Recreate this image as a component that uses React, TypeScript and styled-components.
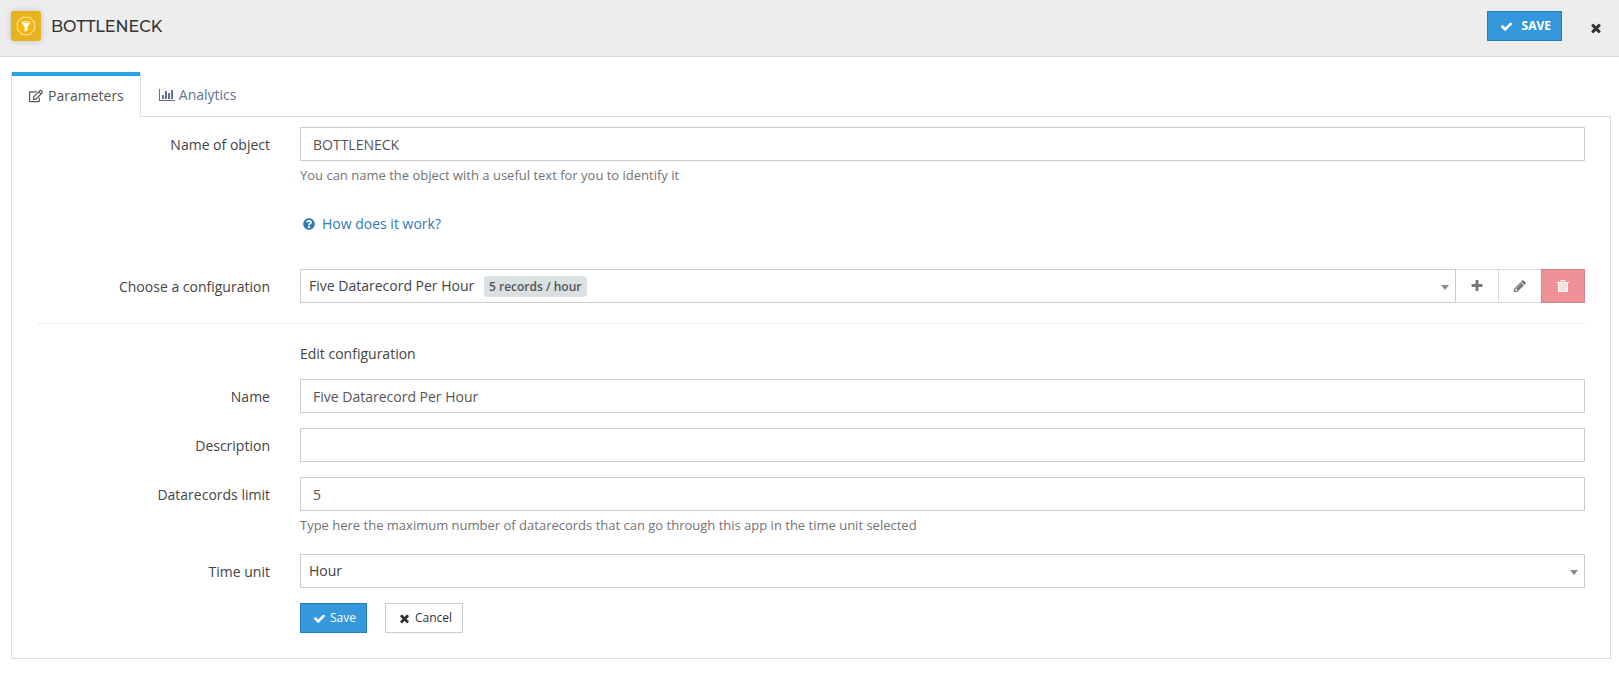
import React from "react";
import styled, { createGlobalStyle, css } from "styled-components";
import { FaRegEdit, FaQuestionCircle } from "react-icons/fa";

const GlobalStyle = createGlobalStyle`
  *, *::before, *::after { box-sizing: border-box; }
  body {
    margin: 0;
    background: #fff;
    color: #444;
    font: 14px/20px "Open Sans", "Noto Sans", sans-serif;
  }
  button, input, select { font: inherit; margin: 0; }
`;

const Header = styled.header`
  display: flex;
  align-items: flex-start;
  padding: 11px 16px 13px 11px;
  background: #ededed;
  border-bottom: 1px solid #d8d8d8;
`;

const AppLogo = styled.svg`
  flex: none;
  width: 30px;
  height: 30px;
  border-radius: 3px;
  background: #e4b31e;
  box-shadow: 0 0 6px rgba(0, 0, 0, 0.2);
`;

const Title = styled.h1`
  flex: 1;
  margin: 0 0 0 10px;
  color: #333;
  font: 500 16px/32px Montserrat, Inter, sans-serif;
`;

const Button = styled.button<{ $primary?: boolean; $strong?: boolean }>`
  display: inline-flex;
  align-items: center;
  justify-content: center;
  height: 30px;
  gap: ${(p) => (p.$strong ? 9 : 4)}px;
  padding: 0 10px 0 12px;
  border: 1px solid #ccc;
  background: #fff;
  color: #333;
  font-size: 12px;
  line-height: 18px;
  font-weight: ${(p) => (p.$strong ? 700 : 400)};
  cursor: pointer;
  ${(p) =>
    p.$primary &&
    css`
      border-color: #217dbb;
      background: #3598dc;
      color: #fff;
    `}
`;

const CloseButton = styled.button`
  display: flex;
  margin: 10px 0 0 27px;
  padding: 0;
  border: 0;
  background: none;
  color: #333;
  cursor: pointer;
`;

const Main = styled.main`
  padding: 15px 8px 20px 11px;
`;

const Tabs = styled.nav`
  display: flex;
  position: relative;
  margin-bottom: -1px;
`;

const Tab = styled.a<{ $active?: boolean }>`
  display: flex;
  align-items: center;
  gap: ${(p) => (p.$active ? 5 : 4)}px;
  height: 45px;
  padding: ${(p) => (p.$active ? "2px 16px 0 17px" : "0 18px")};
  color: ${(p) => (p.$active ? "#555" : "#5f7390")};
  text-decoration: none;
  ${(p) =>
    p.$active &&
    css`
      border: solid #ddd;
      border-width: 0 1px;
      background: #fff;
      box-shadow: inset 0 4px #27a4e3;
    `}
`;

const Panel = styled.form`
  padding: 10px 25px 25px;
  border: 1px solid #ddd;
`;

const Row = styled.div`
  display: flex;
  align-items: flex-start;
  margin: 0 -15px 15px;

  &:last-child {
    margin-bottom: 0;
  }
`;

const LabelCell = styled.div`
  flex: none;
  width: calc(100% / 6);
  padding: 8px 15px 0;
  text-align: right;
`;

const Field = styled.div`
  flex: 1;
  min-width: 0;
  padding: 0 15px;
`;

const controlBox = css`
  display: block;
  width: 100%;
  height: 34px;
  border: 1px solid #ccc;
  border-radius: 0;
  background: #fff;
  outline: 0;
`;

const TextInput = styled.input`
  ${controlBox}
  padding: 0 12px;
  color: #555;
`;

const SelectWrap = styled.div`
  flex: 1;
  min-width: 0;
  position: relative;

  &::after {
    content: "";
    position: absolute;
    right: 7px;
    top: 16px;
    border: solid transparent;
    border-width: 5px 4px 0;
    border-top-color: #888;
    pointer-events: none;
  }
`;

const Select = styled.select`
  ${controlBox}
  appearance: none;
  padding: 0 20px 0 8px;
  color: #444;
`;

const Badge = styled.span`
  position: absolute;
  left: 184px;
  top: 7px;
  padding: 0 5px;
  border-radius: 4px;
  background: #d9e1e2;
  color: #555;
  font-size: 12px;
  line-height: 21px;
  font-weight: 600;
  pointer-events: none;
`;

const InputGroup = styled.div`
  display: flex;
`;

const IconButton = styled.button<{ $danger?: boolean }>`
  display: flex;
  flex: none;
  align-items: center;
  justify-content: center;
  width: 44px;
  height: 34px;
  margin-left: -1px;
  padding: 0;
  border: 1px solid ${(p) => (p.$danger ? "#cf858b" : "#ddd")};
  background: ${(p) => (p.$danger ? "#f09197" : "#fff")};
  color: ${(p) => (p.$danger ? "#fff" : "#777")};
  cursor: pointer;
`;

const Help = styled.p`
  margin: 5px 0;
  color: #737373;
  font-size: 13px;
  line-height: 18px;
`;

const HelpLink = styled.a`
  display: inline-flex;
  align-items: center;
  gap: 7px;
  margin: 10px 0 20px;
  padding-left: 3px;
  color: #337ab7;
  text-decoration: none;
`;

const Divider = styled.hr`
  margin: 20px 0;
  border: 0;
  border-top: 1px solid #eee;
`;

const SectionTitle = styled.h2`
  margin: 0;
  font-size: 14px;
  line-height: 20px;
  font-weight: 400;
`;

const Actions = styled.div`
  display: flex;
  gap: 18px;
`;

const GLYPHS = {
  check:
    "M1671 566q0 40-28 68l-724 724-136 136q-28 28-68 28t-68-28l-136-136-362-362q-28-28-28-68t28-68l136-136q28-28 68-28t68 28l294 295 656-657q28-28 68-28t68 28l136 136q28 28 28 68z",
  times:
    "M1490 1322q0 40-28 68l-136 136q-28 28-68 28t-68-28l-294-294-294 294q-28 28-68 28t-68-28l-136-136q-28-28-28-68t28-68l294-294-294-294q-28-28-28-68t28-68l136-136q28-28 68-28t68 28l294 294 294-294q28-28 68-28t68 28l136 136q28 28 28 68t-28 68l-294 294 294 294q28 28 28 68z",
  pencil:
    "M491 1536l91-91-235-235-91 91v107h128v128h107zm523-928q0-22-22-22-10 0-17 7l-542 542q-7 7-7 17 0 22 22 22 10 0 17-7l542-542q7-7 7-17zm-54-192l416 416-832 832h-416v-416zm683 96q0 53-37 90l-166 166-416-416 166-165q36-38 90-38 53 0 91 38l235 234q37 39 37 91z",
  plus: "M1600 736v192q0 40-28 68t-68 28h-416v416q0 40-28 68t-68 28h-192q-40 0-68-28t-28-68v-416h-416q-40 0-68-28t-28-68v-192q0-40 28-68t68-28h416v-416q0-40 28-68t68-28h192q40 0 68 28t28 68v416h416q40 0 68 28t28 68z",
};

function Glyph({ name, size }: { name: keyof typeof GLYPHS; size: number }) {
  return (
    <svg width={size} height={size} viewBox="0 0 1792 1792" fill="currentColor" aria-hidden="true">
      <path d={GLYPHS[name]} />
    </svg>
  );
}

function ChartIcon() {
  return (
    <svg width="16" height="14" viewBox="0 0 2048 1792" fill="currentColor" aria-hidden="true">
      <path d="M640 896v512h-256v-512h256zm384-512v1024h-256v-1024h256zm1024 1152v128h-2048v-1536h128v1408h1920zm-640-896v768h-256v-768h256zm384-384v1152h-256v-1152h256z" />
    </svg>
  );
}

function TrashIcon() {
  return (
    <svg width="12" height="12" viewBox="0 0 12 12" fill="none" stroke="currentColor" aria-hidden="true">
      <path d="M0 2.500h12" />
      <path d="M4 2V.5h4V2" />
      <path d="M1.500 3v8.500h9V3" fill="currentColor" fillOpacity=".7" />
    </svg>
  );
}

function BottleneckLogo() {
  return (
    <AppLogo viewBox="0 0 30 30" aria-hidden="true">
      <path
        d="M11.400 6.400h7.200l5 5v7.200l-5 5h-7.200l-5-5v-7.200z"
        fill="#f2b410"
        stroke="#fbdc92"
        strokeWidth="1.300"
      />
      <circle cx="15" cy="15" r="6" fill="#fdb804" />
      <path d="M10.300 11.300q4.700-2 9.400 0l-3.200 4.200v3.700l-3 1.300v-5z" fill="#fff" />
      <ellipse cx="15" cy="11.400" rx="3.500" ry=".7" fill="#fdcf58" />
    </AppLogo>
  );
}

interface FormRowProps {
  label?: string;
  htmlFor?: string;
  children: React.ReactNode;
}

function FormRow({ label, htmlFor, children }: FormRowProps) {
  return (
    <Row>
      <LabelCell>{label && <label htmlFor={htmlFor}>{label}</label>}</LabelCell>
      <Field>{children}</Field>
    </Row>
  );
}

export default function App() {
  return (
    <>
      <GlobalStyle />
      <Header>
        <BottleneckLogo />
        <Title>BOTTLENECK</Title>
        <Button type="submit" form="parameters" $primary $strong>
          <Glyph name="check" size={13} />
          SAVE
        </Button>
        <CloseButton type="button" aria-label="Close">
          <Glyph name="times" size={14} />
        </CloseButton>
      </Header>
      <Main>
        <Tabs>
          <Tab href="#parameters" $active aria-current="page">
            <FaRegEdit size={14} />
            Parameters
          </Tab>
          <Tab href="#analytics">
            <ChartIcon />
            Analytics
          </Tab>
        </Tabs>
        <Panel id="parameters" onSubmit={(e) => e.preventDefault()}>
          <FormRow label="Name of object" htmlFor="object-name">
            <TextInput id="object-name" type="text" defaultValue="BOTTLENECK" />
            <Help>You can name the object with a useful text for you to identify it</Help>
          </FormRow>
          <FormRow>
            <HelpLink href="#help">
              <FaQuestionCircle size={12} />
              How does it work?
            </HelpLink>
          </FormRow>
          <FormRow label="Choose a configuration" htmlFor="configuration">
            <InputGroup>
              <SelectWrap>
                <Select id="configuration">
                  <option>Five Datarecord Per Hour</option>
                </Select>
                <Badge>5 records / hour</Badge>
              </SelectWrap>
              <IconButton type="button" aria-label="Add configuration">
                <Glyph name="plus" size={14} />
              </IconButton>
              <IconButton type="button" aria-label="Edit configuration">
                <Glyph name="pencil" size={14} />
              </IconButton>
              <IconButton type="button" aria-label="Delete configuration" $danger>
                <TrashIcon />
              </IconButton>
            </InputGroup>
          </FormRow>
          <Divider />
          <FormRow>
            <SectionTitle>Edit configuration</SectionTitle>
          </FormRow>
          <FormRow label="Name" htmlFor="config-name">
            <TextInput id="config-name" type="text" defaultValue="Five Datarecord Per Hour" />
          </FormRow>
          <FormRow label="Description" htmlFor="config-description">
            <TextInput id="config-description" type="text" />
          </FormRow>
          <FormRow label="Datarecords limit" htmlFor="config-limit">
            <TextInput id="config-limit" type="text" inputMode="numeric" defaultValue="5" />
            <Help>
              Type here the maximum number of datarecords that can go through this app in the time
              unit selected
            </Help>
          </FormRow>
          <FormRow label="Time unit" htmlFor="config-unit">
            <SelectWrap>
              <Select id="config-unit">
                <option>Hour</option>
              </Select>
            </SelectWrap>
          </FormRow>
          <FormRow>
            <Actions>
              <Button type="submit" $primary>
                <Glyph name="check" size={13} />
                Save
              </Button>
              <Button type="button">
                <Glyph name="times" size={13} />
                Cancel
              </Button>
            </Actions>
          </FormRow>
        </Panel>
      </Main>
    </>
  );
}
